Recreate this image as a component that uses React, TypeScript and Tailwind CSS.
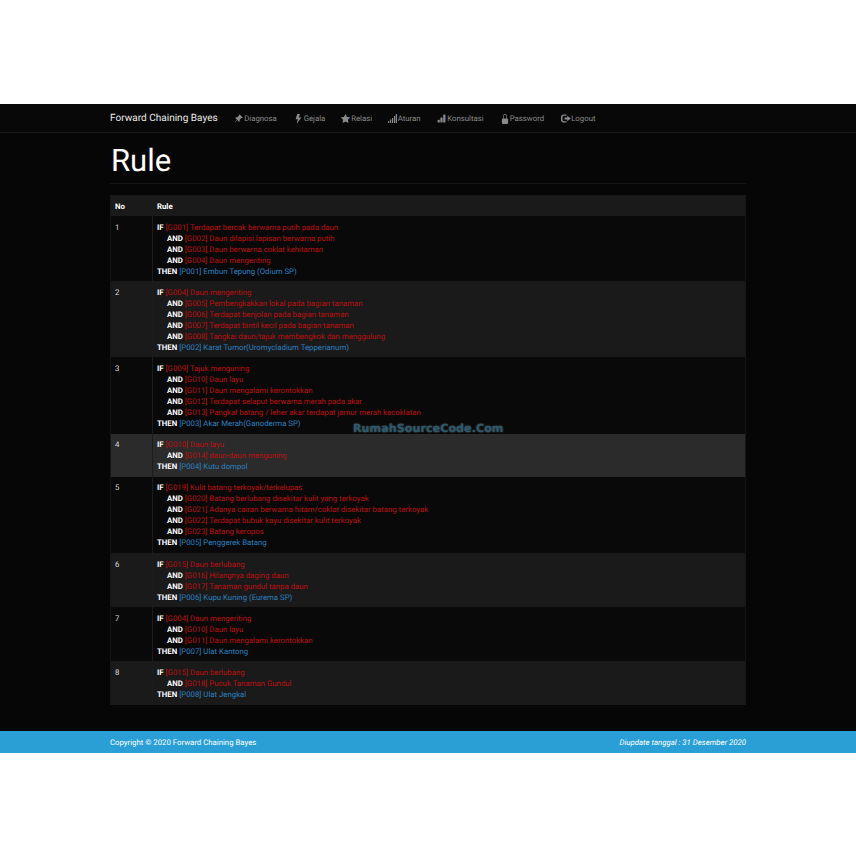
import React from "react";
import { BsPinAngleFill, BsLightningFill, BsStarFill, BsBarChartFill, BsLockFill } from "react-icons/bs";

type Item = [string, string];
type Rule = { no: number; conds: Item[]; then: Item };

const rules: Rule[] = [
  { no: 1, conds: [["G001", "Terdapat bercak berwarna putih pada daun"], ["G002", "Daun dilapisi lapisan berwarna putih"], ["G003", "Daun berwarna coklat kehitaman"], ["G004", "Daun mengeriting"]], then: ["P001", "Embun Tepung (Odium SP)"] },
  { no: 2, conds: [["G004", "Daun mengeriting"], ["G005", "Pembengkakkan lokal pada bagian tanaman"], ["G006", "Terdapat benjolan pada bagian tanaman"], ["G007", "Terdapat bintil kecil pada bagian tanaman"], ["G008", "Tangkai daun/tajuk membengkok dan menggulung"]], then: ["P002", "Karat Tumor(Uromycladium Tepperianum)"] },
  { no: 3, conds: [["G009", "Tajuk menguning"], ["G010", "Daun layu"], ["G011", "Daun mengalami kerontokkan"], ["G012", "Terdapat selaput berwarna merah pada akar"], ["G013", "Pangkal batang / leher akar terdapat jamur merah kecoklatan"]], then: ["P003", "Akar Merah(Ganoderma SP)"] },
  { no: 4, conds: [["G010", "Daun layu"], ["G014", "daun-daun menguning"]], then: ["P004", "Kutu dompol"] },
  { no: 5, conds: [["G019", "Kulit batang terkoyak/terkelupas"], ["G020", "Batang berlubang disekitar kulit yang terkoyak"], ["G021", "Adanya cairan berwarna hitam/coklat disekitar batang terkoyak"], ["G022", "Terdapat bubuk kayu disekitar kulit terkoyak"], ["G023", "Batang keropos"]], then: ["P005", "Penggerek Batang"] },
  { no: 6, conds: [["G015", "Daun berlubang"], ["G016", "Hilangnya daging daun"], ["G017", "Tanaman gundul tanpa daun"]], then: ["P006", "Kupu Kuning (Eurema SP)"] },
  { no: 7, conds: [["G004", "Daun mengeriting"], ["G010", "Daun layu"], ["G011", "Daun mengalami kerontokkan"]], then: ["P007", "Ulat Kantong"] },
  { no: 8, conds: [["G015", "Daun berlubang"], ["G018", "Pucuk Tanaman Gundul"]], then: ["P008", "Ulat Jengkal"] },
];

const SignalIcon = () => (
  <svg width="9" height="9" viewBox="0 0 9 9" fill="currentColor">
    <rect x="0" y="7" width="1.2" height="2" />
    <rect x="2" y="5.5" width="1.2" height="3.5" />
    <rect x="4" y="4" width="1.2" height="5" />
    <rect x="6" y="2" width="1.2" height="7" />
    <rect x="7.8" y="0" width="1.2" height="9" />
  </svg>
);

const LogoutIcon = () => (
  <svg width="10" height="9" viewBox="0 0 10 9" fill="currentColor">
    <path d="M2.5 0.5H5.5V1.8H2.8C2 1.8 1.5 2.3 1.5 3V6C1.5 6.7 2 7.2 2.8 7.2H5.5V8.5H2.5C1 8.5 0 7.5 0 6V3C0 1.5 1 0.5 2.5 0.5Z" />
    <path d="M6.2 1.8L9.8 4.5L6.2 7.2V5.5H3.5V3.5H6.2Z" />
  </svg>
);

const nav = [
  { label: "Diagnosa", icon: <BsPinAngleFill size={9} />, w: "w-[33px]" },
  { label: "Gejala", icon: <BsLightningFill size={9} />, w: "w-[21px]" },
  { label: "Relasi", icon: <BsStarFill size={9} />, w: "w-[20px]" },
  { label: "Aturan", icon: <SignalIcon />, w: "w-[23px]" },
  { label: "Konsultasi", icon: <BsBarChartFill size={9} />, w: "w-[36px]" },
  { label: "Password", icon: <BsLockFill size={10} />, w: "w-[35px]" },
  { label: "Logout", icon: <LogoutIcon />, w: "w-[24px]" },
];

export default function App() {
  return (
    <div className="py-[103px] bg-white min-h-[856px] font-['Roboto','Liberation_Sans',sans-serif] text-[7.8px] leading-[11px] [text-rendering:geometricPrecision]">
      <div className="relative mt-[1px] bg-[#060606]">
        <header className="h-[29px] bg-[#080808] border-b border-[#181818]">
          <div className="mx-[110px] h-[28px] pt-[1px] flex items-center gap-[16.5px]">
            <span className="text-[10.05px] text-[#e8e8e8] whitespace-nowrap">Forward Chaining Bayes</span>
            {nav.map((n) => (
              <span key={n.label} className="flex items-center text-[#8a8a8a] whitespace-nowrap">
                <span className="w-[10px] flex">{n.icon}</span>
                <span className={n.w}>{n.label}</span>
              </span>
            ))}
          </div>
        </header>

        <main className="mx-[110px] pt-[10px]">
          <h1 className="text-[31px] leading-[36px] pl-[1px] text-white font-normal border-b border-[#161616] h-[41px]">Rule</h1>
          <div className="mt-[11px] border-x border-t border-[#161616] text-[#e0e0e0]">
            <div className="flex h-[20px] pt-[1px] bg-[#1a1a1a] font-bold text-white items-center">
              <div className="w-[42px] pl-[4px]">No</div>
              <div className="pl-[4px]">Rule</div>
            </div>
            {rules.map((r, i) => (
              <div
                key={r.no}
                className={`flex ${r.no === 4 ? "bg-[#2b2b2b]" : i % 2 === 0 ? "bg-[#090909]" : "bg-[#1a1a1a]"}`}
              >
                <div className="w-[42px] shrink-0 pl-[4px] pt-[5.6px] text-[#dddddd] border-r border-[#1c1c1c]">{r.no}</div>
                <div className="pl-[4px] pt-[5.6px] pb-[4.6px] whitespace-nowrap">
                  {r.conds.map(([code, text], j) => (
                    <div key={code} className={j === 0 ? "" : "pl-[10px]"}>
                      <b className="text-white">{j === 0 ? "IF" : "AND"}</b>{" "}
                      <span className="text-[#bb1010]">[{code}] {text}</span>
                    </div>
                  ))}
                  <div>
                    <b className="text-white">THEN</b>{" "}
                    <span className="text-[#2c80c0]">[{r.then[0]}] {r.then[1]}</span>
                  </div>
                </div>
              </div>
            ))}
          </div>
          <div className="h-[26.4px]" />
        </main>

        <footer className="h-[22px] pt-[1px] bg-[#2a9fd6] text-white flex items-center justify-between px-[110px]">
          <span>Copyright © 2020 Forward Chaining Bayes</span>
          <i>Diupdate tanggal : 31 Desember 2020</i>
        </footer>

        <div className="absolute left-[353px] top-[318px] font-['DejaVu_Sans',sans-serif] font-bold text-[11.2px] leading-[14px] text-[#2a5a6e] [text-shadow:0_0_2px_#555555]">
          RumahSourceCode.Com
        </div>
      </div>
    </div>
  );
}
